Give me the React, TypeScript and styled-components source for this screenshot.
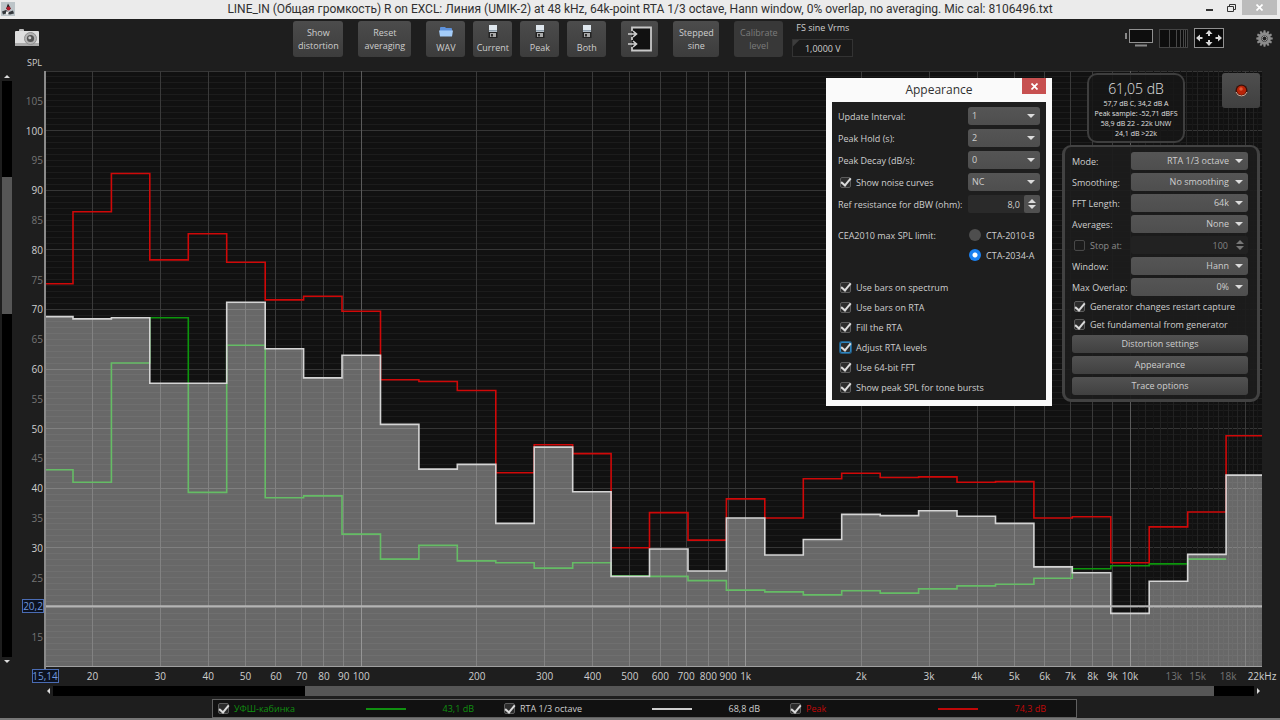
import React, { useId, useLayoutEffect, useRef, useState } from 'react';
import styled, { createGlobalStyle, css } from 'styled-components';

const GlobalStyle = createGlobalStyle`
  * { box-sizing: border-box; }
  body { margin: 0; background: #1e1e1e; }
  button, input, select { font: inherit; color: inherit; margin: 0; }
`;

/* ---------- window frame ---------- */

const Window = styled.div`
  position: relative;
  display: flex;
  flex-direction: column;
  min-height: 100vh;
  background: #1e1e1e;
  color: #cecece;
  font-family: 'Open Sans', 'Noto Sans', sans-serif;
  font-size: 9px;
  line-height: 13px;
`;

const TitleBar = styled.header`
  display: grid;
  grid-template-columns: 1fr minmax(0, auto) 1fr;
  height: 19px;
  background: #ebebeb;
  color: #303030;
`;

const AppIcon = styled.svg`
  width: 14px;
  height: 14px;
  margin: 2px 0 0 1px;
`;

const Title = styled.h1`
  margin: 0;
  overflow: hidden;
  font-family: Roboto, 'Open Sans', sans-serif;
  font-size: 12px;
  font-weight: 400;
  line-height: 19px;
  white-space: nowrap;
  text-overflow: ellipsis;
`;

const WindowControls = styled.div`
  display: flex;
  justify-content: flex-end;
  align-items: flex-start;
  padding-right: 3px;
`;

const WindowButton = styled.button<{ $close?: boolean }>`
  display: flex;
  align-items: center;
  justify-content: center;
  width: ${(p) => (p.$close ? 35 : 22)}px;
  height: 15px;
  padding: 0;
  border: 0;
  background: ${(p) => (p.$close ? '#bcbcbc' : 'transparent')};
`;

/* ---------- toolbar ---------- */

const Toolbar = styled.div`
  display: grid;
  grid-template-columns: 11fr auto 16fr;
  height: 38px;
`;

const ToolbarSide = styled.div<{ $end?: boolean }>`
  display: flex;
  align-items: center;
  justify-content: ${(p) => (p.$end ? 'flex-end' : 'flex-start')};
  gap: 6px;
  padding: 0 7px 0 15px;
`;

const ToolGroups = styled.div`
  display: flex;
  gap: 15px;
  padding-top: 2px;
`;

const ToolGroup = styled.div`
  display: flex;
  gap: 8px;
`;

const ToolButton = styled.button<{ $width: number }>`
  display: flex;
  flex-direction: column;
  align-items: center;
  justify-content: center;
  width: ${(p) => p.$width}px;
  height: 36px;
  padding: 0;
  border: 0;
  border-radius: 3px;
  background: linear-gradient(#4c4c4c, #3c3c3c);
  color: #cecece;
  &:disabled {
    background: #383838;
    color: #7c7c7c;
  }
`;

const ToolIcon = styled.svg`
  width: 14px;
  height: 13px;
  margin-bottom: 3px;
`;

const IconButton = styled.button<{ $spaced?: boolean }>`
  display: flex;
  padding: 0;
  border: 0;
  margin-left: ${(p) => (p.$spaced ? 26 : 0)}px;
  background: none;
`;

const VoltageField = styled.label`
  display: flex;
  flex-direction: column;
  gap: 5px;
  width: 61px;
  margin-left: -6px;
  text-align: center;
  white-space: nowrap;
`;

const VoltageInput = styled.input`
  width: 100%;
  height: 18px;
  padding: 0;
  border: 1px solid #333;
  background: linear-gradient(135deg, #3c3c3c 4px, #1a1a1a 5px);
  text-align: center;
`;

/* ---------- chart area ---------- */

const Workspace = styled.main`
  display: flex;
  flex: 1;
  min-height: 440px;
`;

const VerticalScroll = styled.div`
  display: flex;
  flex-direction: column;
  align-items: center;
  width: 14px;
  padding: 15px 2px 19px;
`;

const Track = styled.div<{ $vertical?: boolean }>`
  display: flex;
  flex: 1;
  flex-direction: ${(p) => (p.$vertical ? 'column' : 'row')};
  ${(p) => (p.$vertical ? 'width: 10px;' : 'height: 10px;')}
  background: #000;
`;

const TrackPart = styled.div<{ $share: number; $thumb?: boolean }>`
  flex: ${(p) => p.$share};
  background: ${(p) => (p.$thumb ? '#565656' : 'transparent')};
`;

const ScrollButton = styled.button`
  display: flex;
  align-items: center;
  justify-content: center;
  width: 9px;
  height: 9px;
  padding: 0;
  border: 0;
  background: none;
`;

const ChartPane = styled.div`
  position: relative;
  flex: 1;
  min-width: 0;
`;

const ChartSvg = styled.svg`
  position: absolute;
  inset: 0;
  width: 100%;
  height: 100%;
  overflow: visible;
  font-size: 10px;
`;

const HorizontalScroll = styled.div`
  display: flex;
  align-items: center;
  height: 12px;
  padding: 0 17px 0 44px;
`;

const Legend = styled.section`
  display: grid;
  grid-template-columns: repeat(3, 1fr);
  height: 19px;
  margin: 2px 203px 0 212px;
  padding-left: 5px;
  border: 1px solid #606060;
  background: #111;
`;

const LegendItem = styled.label<{ $color: string }>`
  display: grid;
  grid-template-columns: 11px 1fr 40px 63px 25px;
  align-items: center;
  gap: 5px;
  color: ${(p) => p.$color};
  white-space: nowrap;
`;

const LegendSwatch = styled.span<{ $color: string }>`
  height: 2px;
  background: ${(p) => p.$color};
`;

const LegendValue = styled.span`
  text-align: right;
`;

const StatusEdge = styled.div`
  height: 2px;
  background: #777;
`;

/* ---------- shared controls ---------- */

const Check = styled.input.attrs({ type: 'checkbox' })`
  display: grid;
  flex: none;
  place-content: center;
  width: 11px;
  height: 11px;
  border: 1px solid #5c5c5c;
  border-radius: 2px;
  appearance: none;
  background: #2c2c2c;
  &:checked::after {
    content: '';
    width: 4px;
    height: 8px;
    margin-top: -2px;
    border: solid #dcdcdc;
    border-width: 0 2px 2px 0;
    transform: rotate(40deg);
  }
  &:disabled {
    border-color: #484848;
    background: transparent;
  }
`;

const DialogCheck = styled(Check)<{ $focused?: boolean }>`
  ${(p) => p.$focused && css`
    border-color: #2f86c0;
    box-shadow: 0 0 0 1px #235f88;
  `}
`;

const Radio = styled.input.attrs({ type: 'radio' })`
  flex: none;
  width: 12px;
  height: 12px;
  border: 0;
  border-radius: 50%;
  appearance: none;
  background: #4e4e4e;
  &:checked {
    background: radial-gradient(circle, #fff 0 2px, #1a80f0 3px);
  }
`;

const SelectBox = styled.div`
  display: grid;
  align-items: center;
  & > * { grid-area: 1 / 1; }
  & > svg {
    justify-self: end;
    margin-right: 5px;
    pointer-events: none;
  }
`;

const SelectInput = styled.select<{ $alignEnd?: boolean }>`
  width: 100%;
  height: 18px;
  padding: ${(p) => (p.$alignEnd ? '0 19px 0 4px' : '0 16px 0 4px')};
  border: 0;
  border-radius: 3px;
  appearance: none;
  background: linear-gradient(#555, #4e4e4e);
  line-height: 16px;
  text-align-last: ${(p) => (p.$alignEnd ? 'right' : 'left')};
`;

const SpinBox = styled.div<{ $disabled?: boolean }>`
  display: flex;
  height: 18px;
  border-radius: 2px;
  background: ${(p) => (p.$disabled ? '#222' : '#2a2a2a')};
  color: ${(p) => (p.$disabled ? '#848484' : '#cecece')};
`;

const SpinInput = styled.input`
  flex: 1;
  width: 20px;
  min-width: 0;
  padding: 0 4px 0 0;
  border: 0;
  background: none;
  text-align: right;
`;

const SpinButtons = styled.div<{ $flat?: boolean }>`
  display: flex;
  flex-direction: column;
  align-items: center;
  justify-content: center;
  gap: 2px;
  width: 16px;
  border-radius: 2px;
  background: ${(p) => (p.$flat ? 'none' : '#505050')};
`;

const SpinButton = styled.button`
  display: flex;
  padding: 0;
  border: 0;
  background: none;
`;

const CheckRow = styled.label<{ $height: number; $gap: number }>`
  display: flex;
  align-items: center;
  gap: ${(p) => p.$gap}px;
  height: ${(p) => p.$height}px;
  padding-left: 2px;
  white-space: nowrap;
`;

/* ---------- right-hand overlay ---------- */

const SideOverlay = styled.aside`
  position: absolute;
  top: 16px;
  right: 20px;
  display: flex;
  flex-direction: column;
  gap: 2px;
  width: 198px;
`;

const MeterRow = styled.div`
  display: flex;
  justify-content: space-between;
  align-items: flex-start;
  padding-left: 25px;
`;

const Meter = styled.section`
  width: 98px;
  height: 70px;
  padding-top: 5px;
  border: 2px solid #3e3e3e;
  border-radius: 10px;
  background: rgba(22, 22, 22, 0.85);
  color: #e0e0e0;
  font-size: 7px;
  line-height: 10px;
  text-align: center;
  white-space: nowrap;
`;

const MeterMain = styled.div`
  margin-bottom: 1px;
  font-size: 14px;
  font-weight: 300;
  line-height: 18px;
`;

const RecordButton = styled.button`
  display: flex;
  align-items: center;
  justify-content: center;
  width: 38px;
  height: 35px;
  padding: 0;
  border: 0;
  border-radius: 3px;
  background: linear-gradient(#4e4e4e, #404040);
`;

const Panel = styled.section`
  display: flex;
  flex-direction: column;
  gap: 3px;
  padding: 5px 9px 4px 7px;
  border: 3px solid #424242;
  border-top-width: 2px;
  border-radius: 9px;
  background: rgba(28, 28, 28, 0.93);
`;

const PanelRow = styled.div`
  display: grid;
  grid-template-columns: 59px 1fr;
  align-items: center;
  white-space: nowrap;
`;

const StopAt = styled.label`
  display: flex;
  align-items: center;
  gap: 5px;
  padding-left: 2px;
  color: #8c8c8c;
`;

const PanelButton = styled.button`
  height: 18px;
  padding: 0;
  border: 0;
  border-radius: 3px;
  background: linear-gradient(#525252, #404040);
  line-height: 16px;
`;

/* ---------- appearance dialog ---------- */

const Dialog = styled.section`
  position: absolute;
  top: 78px;
  right: 228px;
  display: flex;
  flex-direction: column;
  width: 226px;
  padding: 0 6px 6px;
  background: #fafafa;
`;

const DialogHeader = styled.header`
  display: grid;
  grid-template-columns: 24px 1fr 24px;
  height: 24px;
`;

const DialogTitle = styled.h2`
  margin: 0;
  color: #303030;
  font-size: 12px;
  font-weight: 400;
  line-height: 24px;
  text-align: center;
`;

const CloseButton = styled.button`
  display: flex;
  align-items: center;
  justify-content: center;
  height: 16px;
  padding: 0;
  border: 0;
  background: #c75050;
`;

const DialogBody = styled.div`
  padding: 5px 6px 3px;
  background: #1e1e1e;
`;

const DialogFields = styled.div`
  display: grid;
  grid-template-columns: minmax(0, 1fr) 72px;
  align-items: center;
  row-gap: 4px;
  white-space: nowrap;
`;

const RadioFields = styled.fieldset`
  display: grid;
  grid-template-columns: minmax(0, 1fr) 71px;
  align-items: center;
  margin: 12px 0;
  padding: 0;
  border: 0;
  white-space: nowrap;
`;

const RadioLabel = styled.label`
  display: flex;
  grid-column: 2;
  align-items: center;
  gap: 5px;
  height: 20px;
`;

/* ---------- small glyphs ---------- */

type Dir = 'up' | 'down' | 'left' | 'right';
const TRIANGLES: Record<Dir, string> = {
  up: 'M0 4 4 0 8 4Z',
  down: 'M0 0H8L4 4Z',
  left: 'M4 0V8L0 4Z',
  right: 'M0 0 4 4 0 8Z',
};

function Triangle({ dir, size = 8, color = '#dcdcdc' }: { dir: Dir; size?: number; color?: string }) {
  const flat = dir === 'up' || dir === 'down';
  return (
    <svg width={flat ? size : size / 2} height={flat ? size / 2 : size} viewBox={flat ? '0 0 8 4' : '0 0 4 8'} aria-hidden="true">
      <path d={TRIANGLES[dir]} fill={color} />
    </svg>
  );
}

function Cross() {
  return (
    <svg width="7" height="7" viewBox="0 0 7 7" aria-hidden="true">
      <path d="M.5.5l6 6M6.500.5l-6 6" stroke="#fff" strokeWidth="1.700" />
    </svg>
  );
}

function FloppyIcon() {
  return (
    <ToolIcon viewBox="0 0 14 13" aria-hidden="true">
      <rect x="3" y="0" width="8" height="7" fill="#dfe7ee" />
      <rect x="3" y="5" width="8" height="1.500" fill="#8fa0ae" />
      <rect x="2.500" y="7" width="9" height="6" fill="#232323" />
      <rect x="4" y="8" width="6" height="4" fill="#aaa" />
      <rect x="5" y="9" width="2" height="2.500" fill="#333" />
    </ToolIcon>
  );
}

function GearIcon() {
  const teeth = Array.from({ length: 12 }, (_, i) => i * 30);
  return (
    <svg width="17" height="17" viewBox="-8.500 -8.500 17 17" aria-hidden="true">
      {teeth.map((a) => (
        <path key={a} d="M-1.400 -5 L-.9 -8.200 H.9 L1.400 -5Z" fill="#8c8c8c" transform={`rotate(${a})`} />
      ))}
      <circle r="4.600" fill="none" stroke="#8c8c8c" strokeWidth="3" />
      <circle r="2.300" fill="#1e1e1e" stroke="#b0b0b0" strokeWidth=".8" />
    </svg>
  );
}

function Select({ id, value, alignEnd }: { id: string; value: string; alignEnd?: boolean }) {
  return (
    <SelectBox>
      <SelectInput id={id} $alignEnd={alignEnd} defaultValue={value} aria-label={id}>
        <option>{value}</option>
      </SelectInput>
      <Triangle dir="down" />
    </SelectBox>
  );
}

function Spinner({ id, value, disabled }: { id: string; value: string; disabled?: boolean }) {
  const color = disabled ? '#777' : '#dcdcdc';
  return (
    <SpinBox $disabled={disabled}>
      <SpinInput id={id} defaultValue={value} disabled={disabled} aria-label="Value" />
      <SpinButtons $flat={disabled}>
        <SpinButton aria-label="Increase" disabled={disabled}><Triangle dir="up" color={color} /></SpinButton>
        <SpinButton aria-label="Decrease" disabled={disabled}><Triangle dir="down" color={color} /></SpinButton>
      </SpinButtons>
    </SpinBox>
  );
}

/* ---------- spectrum chart ---------- */

// Third-octave band levels in dB, first band centred on 16 Hz.
const CURRENT = [68.8, 68.4, 68.6, 57.6, 57.6, 71.2, 63.4, 58.5, 62.3, 50.7, 43.2, 44, 34.1, 46.9, 39.4, 25.2, 29.8, 26.1, 35, 28.8, 31.4, 35.6, 35.4, 36.2, 35.3, 34.1, 26.8, 25.8, 19, 24.4, 28.9, 42.2];
const PEAK = [74.3, 86.4, 92.8, 78.3, 82.7, 77.9, 71.6, 72.2, 69.7, 58.2, 57.9, 56.4, 42.6, 47.3, 45.8, 30, 35.9, 31.3, 38.2, 35, 41.6, 42.5, 41.8, 41.9, 41, 41.1, 35, 35.2, 27.5, 33.5, 36, 48.8];
const CABIN = [43.1, 41, 61, 68.6, 39.3, 64, 38.4, 38.7, 32.3, 28.1, 30.4, 27.8, 27.5, 26.6, 27.5, 25.3, 25.2, 24.5, 22.9, 22.6, 22.1, 22.8, 22.4, 23.1, 23.6, 23.9, 24.9, 26.5, 27, 27.3, 28.1];

const F_MIN = 15.04;
const F_MAX = 22050;
const DB_MIN = 10;
const DB_MAX = 110;
const CURSOR_DB = 20.2;
const INSET = { left: 31, top: 14, right: 18, bottom: 18 };

const DIM_TICKS: [number, string][] = [[13000, '13k'], [15000, '15k'], [18000, '18k']];

function freqTicks(): [number, string][] {
  const ticks: [number, string][] = [];
  for (const decade of [10, 100, 1000]) {
    for (let n = 1; n <= 9; n++) {
      const f = n * decade;
      if (f >= 20) ticks.push([f, f >= 1000 ? `${f / 1000}k` : `${f}`]);
    }
  }
  ticks.push([10000, '10k'], [22050, '22kHz']);
  return ticks;
}

function SpectrumChart() {
  const ref = useRef<SVGSVGElement>(null);
  const [size, setSize] = useState({ width: 0, height: 0 });
  const clip = useId();

  useLayoutEffect(() => {
    const node = ref.current;
    if (!node) return;
    const measure = () => {
      const box = node.getBoundingClientRect();
      setSize({ width: box.width, height: box.height });
    };
    measure();
    const observer = new ResizeObserver(measure);
    observer.observe(node);
    return () => observer.disconnect();
  }, []);

  const x0 = INSET.left;
  const x1 = Math.max(size.width - INSET.right, x0 + 1);
  const y0 = INSET.top;
  const y1 = Math.max(size.height - INSET.bottom, y0 + 1);
  const fx = (f: number) => x0 + ((x1 - x0) * Math.log(f / F_MIN)) / Math.log(F_MAX / F_MIN);
  const dy = (db: number) => y0 + ((y1 - y0) * (DB_MAX - db)) / (DB_MAX - DB_MIN);
  const snap = (v: number) => Math.floor(v) + 0.5;

  const bandEdge = (i: number) => Math.min(x1, fx(Math.max(F_MIN, Math.pow(10, (i + 12 - 0.5) / 10))));
  const steps = (levels: number[]) =>
    levels
      .map((db, i) => `${i ? 'L' : 'M'}${bandEdge(i).toFixed(1)} ${dy(db).toFixed(1)}H${bandEdge(i + 1).toFixed(1)}`)
      .join('');

  const dbLines = Array.from({ length: DB_MAX - DB_MIN + 1 }, (_, i) => DB_MIN + i);
  const dbLabels = Array.from({ length: 19 }, (_, i) => 15 + i * 5).filter((v) => v !== 20);
  const freqMajor = freqTicks().filter(([f]) => f < 22000).concat([[20000, '']]);
  const freqMinor = Array.from({ length: 23 }, (_, i) => 10500 + i * 500).filter((f) => f !== 20000);
  const current = steps(CURRENT);

  return (
    <ChartSvg ref={ref} role="img" aria-label="RTA spectrum, SPL against frequency">
      <defs>
        <clipPath id={clip}>
          <rect x={x0} y={y0} width={x1 - x0} height={y1 - y0} />
        </clipPath>
      </defs>
      <rect x={x0} y={y0} width={x1 - x0} height={y1 - y0} fill="#111" />
      <g clipPath={`url(#${clip})`} fill="none">
        {dbLines.map((db) => (
          <line key={db} x1={x0} x2={x1} y1={snap(dy(db))} y2={snap(dy(db))} stroke={db % 10 ? '#1c1c1c' : '#363636'} />
        ))}
        {freqMinor.map((f) => (
          <line key={f} x1={snap(fx(f))} x2={snap(fx(f))} y1={y0} y2={y1} stroke={f % 1000 ? '#171717' : '#222'} />
        ))}
        {freqMajor.map(([f]) => (
          <line key={f} x1={snap(fx(f))} x2={snap(fx(f))} y1={y0} y2={y1} stroke={[100, 1000, 10000].includes(f) ? '#5a5a5a' : '#3a3a3a'} />
        ))}
        <path d={steps(CABIN)} stroke="#0c960c" strokeWidth="1.600" />
        <path d={steps(PEAK)} stroke="#d00808" strokeWidth="1.600" />
        <path d={`${current}V${y1}H${x0}Z`} fill="#fff" fillOpacity=".37" />
        <path d={current} stroke="#d4d4d4" strokeWidth="1.600" />
        <line x1={x0} x2={x1} y1={dy(CURSOR_DB)} y2={dy(CURSOR_DB)} stroke="#b4b4b4" strokeWidth="2" />
        <line x1={x0} x2={x1} y1={y1 - 0.5} y2={y1 - 0.5} stroke="#a0a0a0" />
      </g>
      <line x1={x0} x2={x0} y1={y0} y2={y1 + 2} stroke="#8a8a8a" strokeWidth="2" />

      <g fill="#cecece" textAnchor="end">
        <text x={x0 - 3} y={9} fontSize="9">SPL</text>
        {dbLabels.map((db) => (
          <text key={db} x={x0 - 2} y={dy(db) + 4} fill={db % 10 ? '#747474' : '#cecece'}>{db}</text>
        ))}
      </g>
      <g fill="#cecece" textAnchor="middle">
        {freqTicks().map(([f, label]) => (
          <text key={f} x={fx(f)} y={y1 + 13}>{label}</text>
        ))}
        {DIM_TICKS.map(([f, label]) => (
          <text key={f} x={fx(f)} y={y1 + 13} fill="#747474">{label}</text>
        ))}
      </g>
      <g fill="#0c1220" stroke="#4a6cb4">
        <rect x={x0 - 22.5} y={snap(dy(CURSOR_DB)) - 7} width="21" height="13" />
        <rect x={x0 - 12.5} y={snap(y1) + 2} width="26" height="13" />
      </g>
      <g fill="#6f97dc" textAnchor="middle">
        <text x={x0 - 12} y={dy(CURSOR_DB) + 4}>20,2</text>
        <text x={x0} y={y1 + 13}>15,14</text>
      </g>
    </ChartSvg>
  );
}

/* ---------- composed parts ---------- */

const MODE_ROWS: [string, string][] = [
  ['Mode:', 'RTA 1/3 octave'],
  ['Smoothing:', 'No smoothing'],
  ['FFT Length:', '64k'],
  ['Averages:', 'None'],
];
const WINDOW_ROWS: [string, string][] = [
  ['Window:', 'Hann'],
  ['Max Overlap:', '0%'],
];

function PanelSelects({ rows }: { rows: [string, string][] }) {
  return (
    <>
      {rows.map(([label, value]) => (
        <PanelRow key={label}>
          <label htmlFor={`rta-${label}`}>{label}</label>
          <Select id={`rta-${label}`} value={value} alignEnd />
        </PanelRow>
      ))}
    </>
  );
}

function RtaSidebar() {
  return (
    <SideOverlay>
      <MeterRow>
        <Meter>
          <MeterMain>61,05 dB</MeterMain>
          <div>57,7 dB C, 34,2 dB A</div>
          <div>Peak sample: -52,71 dBFS</div>
          <div>58,9 dB 22 - 22k UNW</div>
          <div>24,1 dB &gt;22k</div>
        </Meter>
        <RecordButton aria-label="Record">
          <svg width="13" height="13" viewBox="0 0 13 13" aria-hidden="true">
            <circle cx="6.500" cy="6.500" r="6" fill="#3a1008" />
            <path d="M1 8a5.800 5.800 0 0 0 11 0" fill="none" stroke="#d8b8a8" strokeWidth="1" />
            <circle cx="6.500" cy="6.300" r="4.600" fill="#b82408" />
            <circle cx="6" cy="5" r="1.800" fill="#e05a38" />
          </svg>
        </RecordButton>
      </MeterRow>
      <Panel>
        <PanelSelects rows={MODE_ROWS} />
        <PanelRow>
          <StopAt><Check disabled />Stop at:</StopAt>
          <Spinner id="stop-at" value="100" disabled />
        </PanelRow>
        <PanelSelects rows={WINDOW_ROWS} />
        <CheckRow $height={15} $gap={5}><Check defaultChecked />Generator changes restart capture</CheckRow>
        <CheckRow $height={15} $gap={5}><Check defaultChecked />Get fundamental from generator</CheckRow>
        <PanelButton>Distortion settings</PanelButton>
        <PanelButton>Appearance</PanelButton>
        <PanelButton>Trace options</PanelButton>
      </Panel>
    </SideOverlay>
  );
}

const OPTIONS = ['Use bars on spectrum', 'Use bars on RTA', 'Fill the RTA', 'Adjust RTA levels', 'Use 64-bit FFT', 'Show peak SPL for tone bursts'];

function AppearanceDialog() {
  return (
    <Dialog role="dialog" aria-label="Appearance">
      <DialogHeader>
        <span />
        <DialogTitle>Appearance</DialogTitle>
        <CloseButton aria-label="Close"><Cross /></CloseButton>
      </DialogHeader>
      <DialogBody>
        <DialogFields>
          <label htmlFor="interval">Update Interval:</label>
          <Select id="interval" value="1" />
          <label htmlFor="hold">Peak Hold (s):</label>
          <Select id="hold" value="2" />
          <label htmlFor="decay">Peak Decay (dB/s):</label>
          <Select id="decay" value="0" />
          <CheckRow $height={18} $gap={5}><DialogCheck defaultChecked />Show noise curves</CheckRow>
          <Select id="noise" value="NC" />
          <label htmlFor="resistance">Ref resistance for dBW (ohm):</label>
          <Spinner id="resistance" value="8,0" />
        </DialogFields>
        <RadioFields>
          <span>CEA2010 max SPL limit:</span>
          <RadioLabel><Radio name="cea" />CTA-2010-B</RadioLabel>
          <RadioLabel><Radio name="cea" defaultChecked />CTA-2034-A</RadioLabel>
        </RadioFields>
        {OPTIONS.map((option) => (
          <CheckRow key={option} $height={20} $gap={5}>
            <DialogCheck defaultChecked $focused={option === 'Adjust RTA levels'} />
            {option}
          </CheckRow>
        ))}
      </DialogBody>
    </Dialog>
  );
}

function MainToolbar() {
  return (
    <Toolbar>
      <ToolbarSide>
        <IconButton aria-label="Capture image">
          <svg width="24" height="18" viewBox="0 0 24 18" aria-hidden="true">
            <rect x="4" y="0" width="5" height="3" rx="1" fill="#bbb" />
            <rect x="0" y="2" width="24" height="15" rx="1" fill="#dedede" />
            <rect x="0" y="14" width="24" height="3" fill="#aaa" />
            <circle cx="15.500" cy="9.500" r="6" fill="#b4b4b4" stroke="#909090" />
            <circle cx="15.500" cy="9.500" r="3.600" fill="#555" />
            <circle cx="14.800" cy="8.800" r="1.500" fill="#ccc" />
          </svg>
        </IconButton>
      </ToolbarSide>
      <ToolGroups>
        <ToolButton $width={50}><span>Show</span><span>distortion</span></ToolButton>
        <ToolButton $width={53}><span>Reset</span><span>averaging</span></ToolButton>
        <ToolGroup>
          <ToolButton $width={39}>
            <ToolIcon viewBox="0 0 14 13" aria-hidden="true">
              <path d="M1 3q0-1 1-1h4l1 1h5q1 0 1 1v7H1Z" fill="#5e92dc" />
              <path d="M0 5.500h14l-1 6H1Z" fill="#a4ccf8" />
            </ToolIcon>
            WAV
          </ToolButton>
          <ToolButton $width={39}><FloppyIcon />Current</ToolButton>
          <ToolButton $width={39}><FloppyIcon />Peak</ToolButton>
          <ToolButton $width={39}><FloppyIcon />Both</ToolButton>
        </ToolGroup>
        <ToolButton $width={37} aria-label="Import">
          <svg width="26" height="26" viewBox="0 0 26 26" aria-hidden="true">
            <path d="M5 1.500H24V24.500H5Z" fill="#111" />
            <path d="M5 5V1.500H24V24.500H5V21M5 11V14" fill="none" stroke="#c8c8c8" strokeWidth="1.800" />
            <path d="M1 8H9M6 5l3.500 3L6 11M1 18H9M6 15l3.500 3L6 21" fill="none" stroke="#d0d0d0" strokeWidth="1.600" />
          </svg>
        </ToolButton>
        <ToolButton $width={46}><span>Stepped</span><span>sine</span></ToolButton>
        <ToolButton $width={49} disabled><span>Calibrate</span><span>level</span></ToolButton>
        <VoltageField>
          FS sine Vrms
          <VoltageInput defaultValue="1,0000 V" />
        </VoltageField>
      </ToolGroups>
      <ToolbarSide $end>
        <IconButton aria-label="Overlay window">
          <svg width="28" height="19" viewBox="0 0 28 19" aria-hidden="true">
            <rect x="4.500" y=".5" width="23" height="13" fill="#0e0e0e" stroke="#909090" />
            <rect x="0" y="4" width="2" height="6" fill="#888" />
            <rect x="10" y="15.500" width="12" height="2" fill="#888" />
          </svg>
        </IconButton>
        <IconButton aria-label="Frequency axis">
          <svg width="29" height="19" viewBox="0 0 29 19" aria-hidden="true">
            <rect x=".5" y=".5" width="28" height="18" fill="#0e0e0e" stroke="#444" />
            <path d="M10.500 1v17M17.500 1v17M21.500 1v17M24.500 1v17M26.500 1v17" stroke="#484848" />
          </svg>
        </IconButton>
        <IconButton aria-label="Graph limits">
          <svg width="30" height="20" viewBox="0 0 30 20" aria-hidden="true">
            <rect x=".5" y=".5" width="29" height="19" fill="#0a0a0a" stroke="#909090" />
            <path d="M15 2l3.500 4h-2.500v2h-2v-2h-2.500ZM15 18l3.500-4h-2.500v-2h-2v2h-2.500ZM2 10l4-3.500v2.500h2.500v2H6v2.500ZM28 10l-4-3.500v2.500h-2.500v2H24v2.500Z" fill="#d8d8d8" />
          </svg>
        </IconButton>
        <IconButton aria-label="Settings" $spaced><GearIcon /></IconButton>
      </ToolbarSide>
    </Toolbar>
  );
}

const TRACES = [
  { name: 'УФШ-кабинка', color: '#109010', value: '43,1 dB' },
  { name: 'RTA 1/3 octave', color: '#cecece', value: '68,8 dB' },
  { name: 'Peak', color: '#c00808', value: '74,3 dB' },
];

export default function App() {
  return (
    <Window>
      <GlobalStyle />
      <TitleBar>
        <AppIcon viewBox="0 0 14 14" aria-hidden="true">
          <rect width="14" height="14" fill="#bcc4c8" />
          <path d="M7 1.500 10 7H5Z" fill="#222" />
          <circle cx="7.500" cy="6.500" r="2" fill="#b01c2c" />
          <path d="M1 9.500 5 8l3 2 4-1.500 1 3-4 1-4-1-3 1Z" fill="#34383c" />
          <path d="M5 9.500h3l-1 3H5Z" fill="#f0f0f0" />
        </AppIcon>
        <Title>LINE_IN (Общая громкость) R on EXCL: Линия (UMIK-2) at 48 kHz, 64k-point RTA 1/3 octave, Hann window, 0% overlap, no averaging. Mic cal: 8106496.txt</Title>
        <WindowControls>
          <WindowButton aria-label="Minimise">
            <svg width="7" height="7" viewBox="0 0 7 7" aria-hidden="true"><rect y="5" width="7" height="2" fill="#333" /></svg>
          </WindowButton>
          <WindowButton aria-label="Restore">
            <svg width="9" height="8" viewBox="0 0 9 8" aria-hidden="true">
              <path d="M2.500 2V.5h6v5H7M.5 2.500h6v5h-6Z" fill="none" stroke="#333" />
            </svg>
          </WindowButton>
          <WindowButton $close aria-label="Close window"><Cross /></WindowButton>
        </WindowControls>
      </TitleBar>

      <MainToolbar />

      <Workspace>
        <VerticalScroll>
          <ScrollButton aria-label="Scroll up"><Triangle dir="up" size={6} /></ScrollButton>
          <Track $vertical>
            <TrackPart $share={96} />
            <TrackPart $share={137} $thumb />
            <TrackPart $share={343} />
          </Track>
          <ScrollButton aria-label="Scroll down"><Triangle dir="down" size={6} /></ScrollButton>
        </VerticalScroll>
        <ChartPane>
          <SpectrumChart />
          <RtaSidebar />
        </ChartPane>
      </Workspace>

      <HorizontalScroll>
        <ScrollButton aria-label="Scroll left"><Triangle dir="left" size={6} /></ScrollButton>
        <Track>
          <TrackPart $share={252} />
          <TrackPart $share={908} $thumb />
          <TrackPart $share={40} />
        </Track>
        <ScrollButton aria-label="Scroll right"><Triangle dir="right" size={6} /></ScrollButton>
      </HorizontalScroll>

      <Legend>
        {TRACES.map((t) => (
          <LegendItem key={t.name} $color={t.color}>
            <Check defaultChecked />
            <span>{t.name}</span>
            <LegendSwatch $color={t.color} />
            <LegendValue>{t.value}</LegendValue>
          </LegendItem>
        ))}
      </Legend>
      <StatusEdge />

      <AppearanceDialog />
    </Window>
  );
}
